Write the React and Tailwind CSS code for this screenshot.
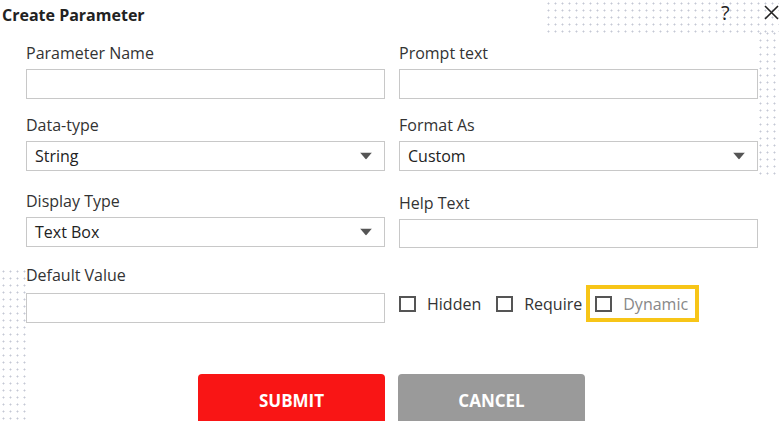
import React from "react";

const font = { fontFamily: '"Open Sans", "Noto Sans", Arial, sans-serif' };

function Caret() {
  return (
    <svg width="12" height="7" viewBox="0 0 12 7" className="absolute right-[12px] top-1/2 -translate-y-1/2">
      <path d="M0 0 L12 0 L6 7 Z" fill="#555" />
    </svg>
  );
}

function Box({ children, select, h = "h-[30px]" }) {
  return (
    <div className={`relative ${h} w-full border border-[#c8c8c8] bg-white flex items-center pl-[8px] text-[16px] text-[#222]`}>
      {children}
      {select && <Caret />}
    </div>
  );
}

function Label({ children, className = "" }) {
  return <div className={`h-[22px] leading-[22px] text-[16px] text-[#333] ${className}`}>{children}</div>;
}

function Check({ label, gray }) {
  return (
    <div className="flex items-center">
      <div className="w-[17px] h-[16px] border-2 border-[#555] bg-white" />
      <span className={`ml-[11px] text-[16px] leading-[22px] ${gray ? "text-[#888]" : "text-[#333]"}`}>{label}</span>
    </div>
  );
}

const dots = "bg-[radial-gradient(circle,#c4c7d4_0.8px,transparent_1.2px)] bg-[length:7px_7px]";

export default function App() {
  return (
    <div className="relative w-[779px] h-[421px] overflow-hidden bg-white" style={font}>
      <div className={`absolute left-[545px] top-0 w-[234px] h-[35px] ${dots}`} />
      <div className={`absolute left-[757px] top-[30px] w-[22px] h-[148px] ${dots}`} />
      <div className={`absolute left-0 top-[268px] w-[27px] h-[153px] ${dots}`} />

      <div className="absolute left-[721px] top-[1px] text-[20px] text-[#222] leading-[24px]">?</div>
      <svg className="absolute left-[764px] top-[5px]" width="15" height="15" viewBox="0 0 15 15">
        <path d="M1 1 L14 14 M14 1 L1 14" stroke="#222" strokeWidth="1.6" />
      </svg>

      <div className="relative pl-[2px] pt-[3px] text-[16px] font-bold text-[#222] leading-[24px]">Create Parameter</div>

      <div className="relative flex gap-[14px] pl-[26px] mt-[15px]">
        <div className="w-[359px] flex flex-col">
          <Label>Parameter Name</Label>
          <div className="mt-[5px]"><Box /></div>
          <Label className="mt-[15px]">Data-type</Label>
          <div className="mt-[5px]"><Box select>String</Box></div>
          <Label className="mt-[19px]">Display Type</Label>
          <div className="mt-[5px]"><Box select>Text Box</Box></div>
          <Label className="mt-[17px]">Default Value</Label>
          <div className="mt-[7px]"><Box /></div>
        </div>
        <div className="w-[359px] flex flex-col">
          <Label>Prompt text</Label>
          <div className="mt-[5px]"><Box /></div>
          <Label className="mt-[15px]">Format As</Label>
          <div className="mt-[5px]"><Box select>Custom</Box></div>
          <Label className="mt-[21px]">Help Text</Label>
          <div className="mt-[5px]"><Box h="h-[29px]" /></div>
          <div className="mt-[37px] flex items-center">
            <Check label="Hidden" />
            <div className="ml-[15px]"><Check label="Require" /></div>
            <div className="ml-[4px] border-4 border-[#f7c518] pl-[5px] pr-[7px] h-[37px] flex items-center">
              <Check label="Dynamic" gray />
            </div>
          </div>
        </div>
      </div>

      <div className="relative flex gap-[13px] pl-[198px] mt-[51px]">
        <div className="w-[187px] h-[60px] rounded-t-[4px] bg-[#f91515] text-white font-bold text-[17px] flex justify-center pt-[14px]">SUBMIT</div>
        <div className="w-[187px] h-[60px] rounded-t-[4px] bg-[#9a9a9a] text-white font-bold text-[17px] flex justify-center pt-[14px]">CANCEL</div>
      </div>
    </div>
  );
}
